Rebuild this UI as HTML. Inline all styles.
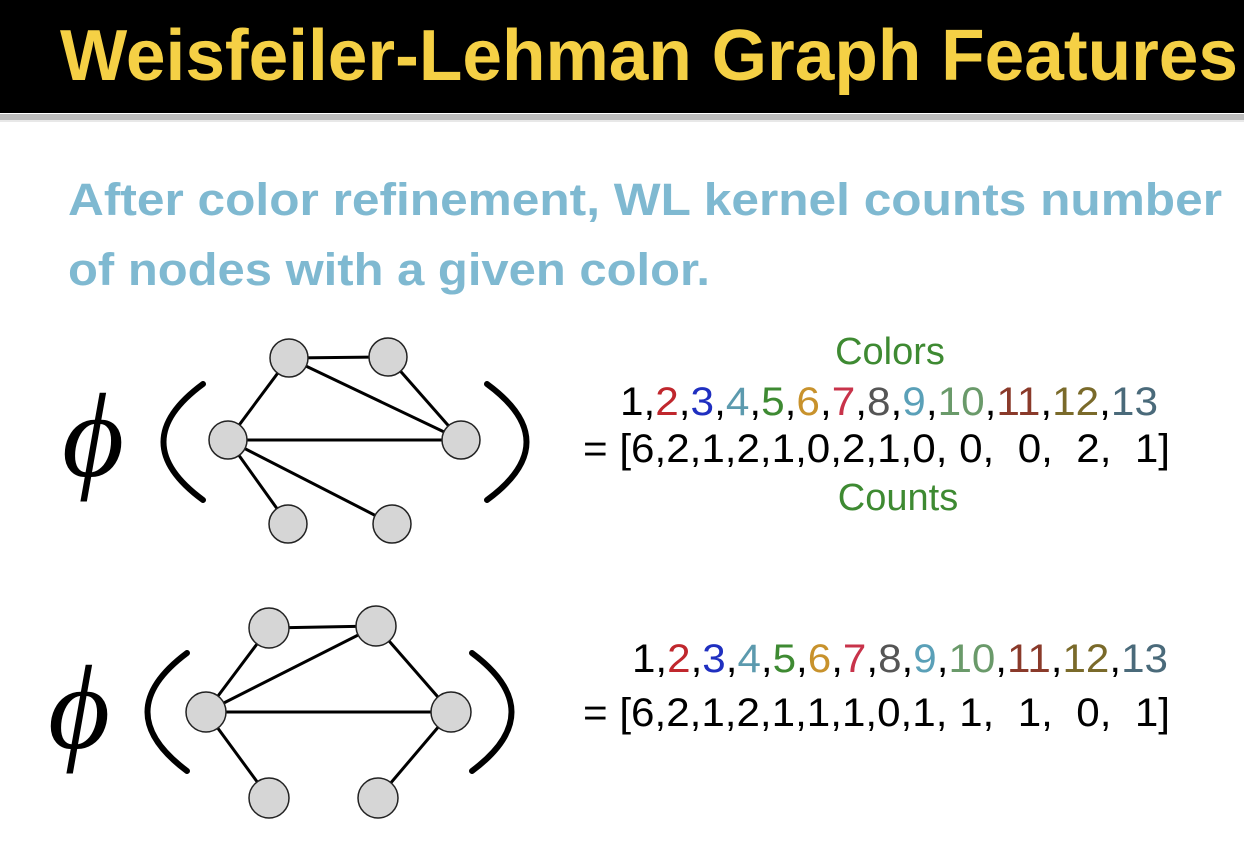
<!DOCTYPE html>
<html><head><meta charset="utf-8"><style>
html,body{margin:0;padding:0;background:#fff;width:1244px;height:855px;overflow:hidden}
text{white-space:pre}
</style></head><body>
<svg width="1244" height="855" viewBox="0 0 1244 855" xmlns="http://www.w3.org/2000/svg">
<rect x="0" y="0" width="1244" height="113" fill="#000"/>
<rect x="0" y="114" width="1244" height="6" fill="#bdbdbd"/>
<rect x="0" y="120" width="1244" height="2" fill="#e8e8e8"/>
<text x="60" y="80" font-family="Liberation Sans Narrow, Liberation Sans, sans-serif" font-weight="bold" font-size="72" fill="#f5d045" textLength="1178" lengthAdjust="spacingAndGlyphs">Weisfeiler-Lehman Graph Features</text>
<g font-family="Liberation Sans, sans-serif" font-weight="bold" font-size="45" fill="#7fb9d1">
<text x="68" y="215" textLength="1154" lengthAdjust="spacingAndGlyphs">After color refinement, WL kernel counts number</text>
<text x="68" y="285" textLength="642" lengthAdjust="spacingAndGlyphs">of nodes with a given color.</text>
</g>
<g stroke="#000" stroke-width="3" fill="none">
<line x1="289" y1="358" x2="388" y2="357"/><line x1="289" y1="358" x2="228" y2="440"/>
<line x1="289" y1="358" x2="461" y2="440"/><line x1="388" y1="357" x2="461" y2="440"/>
<line x1="228" y1="440" x2="461" y2="440"/><line x1="228" y1="440" x2="288" y2="524"/>
<line x1="228" y1="440" x2="392" y2="524"/>
<line x1="269" y1="628" x2="376" y2="626"/><line x1="269" y1="628" x2="206" y2="712"/>
<line x1="376" y1="626" x2="206" y2="712"/><line x1="376" y1="626" x2="451" y2="712"/>
<line x1="206" y1="712" x2="451" y2="712"/><line x1="206" y1="712" x2="269" y2="798"/>
<line x1="451" y1="712" x2="378" y2="798"/>
</g>
<g fill="#d6d6d6" stroke="#222" stroke-width="1.5">
<circle cx="289" cy="358" r="19"/><circle cx="388" cy="357" r="19"/><circle cx="228" cy="440" r="19"/>
<circle cx="461" cy="440" r="19"/><circle cx="288" cy="524" r="19"/><circle cx="392" cy="524" r="19"/>
<circle cx="269" cy="628" r="20"/><circle cx="376" cy="626" r="20"/><circle cx="206" cy="712" r="20"/>
<circle cx="451" cy="712" r="20"/><circle cx="269" cy="798" r="20"/><circle cx="378" cy="798" r="20"/>
</g>
<g font-family="Liberation Serif, serif" font-style="italic" fill="#000">
<text x="62" y="476" font-size="120">ϕ</text>
<text x="48" y="748" font-size="120">ϕ</text>
</g>
<g stroke="#000" fill="none" stroke-linecap="round">
<path d="M203 384 Q124 442 203 500" stroke-width="6"/>
<path d="M487 384 Q566 442 487 500" stroke-width="6"/>
<path d="M187 653 Q108 712 187 771" stroke-width="6"/>
<path d="M472 653 Q551 712 472 771" stroke-width="6"/>
</g>
<g font-family="Liberation Sans, sans-serif" font-size="40">
<text x="890" y="364" text-anchor="middle" fill="#3e8a32" font-size="38">Colors</text>
<text x="898" y="510" text-anchor="middle" fill="#3e8a32" font-size="38">Counts</text>
<text x="620" y="415" textLength="538" lengthAdjust="spacingAndGlyphs"><tspan fill="#000">1,</tspan><tspan fill="#c0272d">2</tspan>,<tspan fill="#1f2fc0">3</tspan>,<tspan fill="#5c9aae">4</tspan>,<tspan fill="#3e8a32">5</tspan>,<tspan fill="#c8922c">6</tspan>,<tspan fill="#c8334a">7</tspan>,<tspan fill="#555">8</tspan>,<tspan fill="#5aa0b8">9</tspan>,<tspan fill="#6a9a6a">10</tspan>,<tspan fill="#8a3a2a">11</tspan>,<tspan fill="#7a6a2a">12</tspan>,<tspan fill="#4a6a7a">13</tspan></text>
<text x="583" y="462" fill="#000" textLength="587" lengthAdjust="spacingAndGlyphs" xml:space="preserve">= [6,2,1,2,1,0,2,1,0, 0,  0,  2,  1]</text>
<text x="632" y="672" textLength="536" lengthAdjust="spacingAndGlyphs"><tspan fill="#000">1,</tspan><tspan fill="#c0272d">2</tspan>,<tspan fill="#1f2fc0">3</tspan>,<tspan fill="#5c9aae">4</tspan>,<tspan fill="#3e8a32">5</tspan>,<tspan fill="#c8922c">6</tspan>,<tspan fill="#c8334a">7</tspan>,<tspan fill="#555">8</tspan>,<tspan fill="#5aa0b8">9</tspan>,<tspan fill="#6a9a6a">10</tspan>,<tspan fill="#8a3a2a">11</tspan>,<tspan fill="#7a6a2a">12</tspan>,<tspan fill="#4a6a7a">13</tspan></text>
<text x="583" y="726" fill="#000" textLength="587" lengthAdjust="spacingAndGlyphs" xml:space="preserve">= [6,2,1,2,1,1,1,0,1, 1,  1,  0,  1]</text>
</g>
</svg>
</body></html>
